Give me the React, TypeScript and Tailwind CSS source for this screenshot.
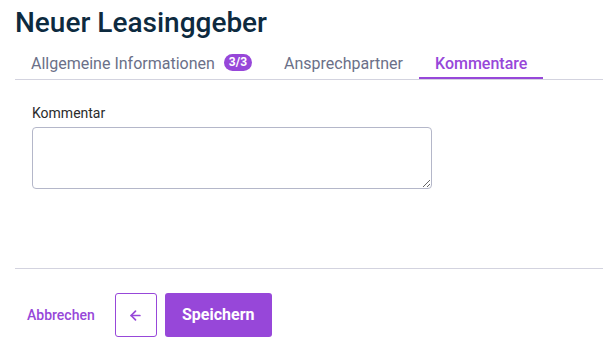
import { ArrowLeft } from 'lucide-react'

const tabs = [
  { label: 'Allgemeine Informationen', badge: '3/3', active: false },
  { label: 'Ansprechpartner', active: false },
  { label: 'Kommentare', active: true },
]

export default function App() {
  return (
    <div className="min-h-screen bg-white pl-[15px] pr-[8px] font-['Roboto',sans-serif]">
      <h1 className="pt-[6px] text-[28px] font-medium leading-[34px] text-[#0d2a3f]">Neuer Leasinggeber</h1>

      <div className="mt-[14px] flex border-b border-[#d3d3df]">
        {tabs.map((tab) => (
          <div
            key={tab.label}
            className={`flex h-[25px] items-start gap-[9px] border-b-2 px-[16px] text-[16px] leading-[19px] ${
              tab.active ? 'border-[#9747d9] font-medium text-[#9747d9]' : 'border-transparent text-[#6b7088]'
            }`}
          >
            <span>{tab.label}</span>
            {tab.badge && (
              <span className="rounded-[9px] bg-[#9747d9] px-[5px] text-[12px] font-bold leading-[17px] text-white">
                {tab.badge}
              </span>
            )}
          </div>
        ))}
      </div>

      <div className="px-[17px] pt-[23px]">
        <label className="block text-[14px] leading-[20px] text-[#2b2b2b]">Kommentar</label>
        <textarea className="mt-[4px] block h-[62px] w-[400px] rounded-[4px] border border-[#b4b7c9] bg-white" />
      </div>

      <div className="mt-[79px] border-t border-[#d3d3df]" />

      <div className="flex items-center gap-[8px] pt-[24px]">
        <button className="px-[12px] text-[14px] font-medium text-[#9747d9]">Abbrechen</button>
        <button className="flex h-[44px] w-[42px] items-center justify-center rounded-[3px] border border-[#9747d9] bg-white text-[#9747d9]">
          <ArrowLeft size={15} strokeWidth={2.75} />
        </button>
        <button className="h-[44px] w-[107px] rounded-[3px] bg-[#9747d9] text-[16px] font-bold text-white">Speichern</button>
      </div>
    </div>
  )
}
